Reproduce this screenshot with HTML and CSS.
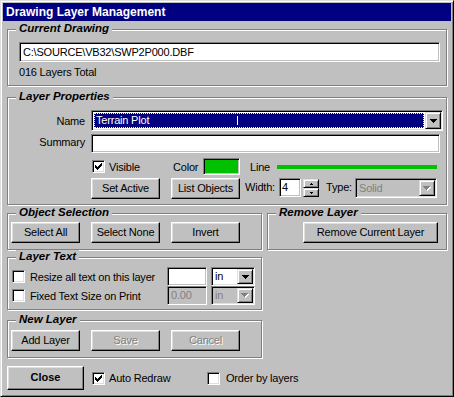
FILE: index.html
```html
<!DOCTYPE html>
<html lang="en">
<head>
    <meta charset="UTF-8">
    <title>Drawing Layer Management</title>
    <link rel="stylesheet" href="styles.css">
</head>
<body>
    <div class="window">
        <div class="titlebar">Drawing Layer Management</div>
        <div class="client">

            <div class="group current">
                <div class="legend">Current Drawing</div>
                <div class="field path">C:\SOURCE\VB32\SWP2P000.DBF</div>
                <div class="note">016 Layers Total</div>
            </div>

            <div class="group props">
                <div class="legend">Layer Properties</div>
                <div class="prop-row name-row">
                    <span class="prop-label">Name</span>
                    <div class="combo combo-name">
                        <div class="combo-value selected">Terrain Plot<span class="ibeam"></span></div>
                        <span class="drop"><svg width="7" height="4"><path d="M0 0h7v1h-1v1h-1v1h-1v1h-1v-1h-1v-1h-1v-1h-1z"/></svg></span>
                    </div>
                </div>
                <div class="prop-row summary-row">
                    <span class="prop-label summary-label">Summary</span>
                    <div class="field summary"></div>
                </div>
                <div class="style-row">
                    <label class="check visible">
                        <span class="box"><svg width="7" height="7"><path d="M6 0h1v1h-1z M5 1h2v1h-2z M0 2h1v1h-1z M4 2h3v1h-3z M0 3h2v1h-2z M3 3h3v1h-3z M0 4h5v1h-5z M1 5h3v1h-3z M2 6h1v1h-1z"/></svg></span>
                        Visible
                    </label>
                    <span class="color-label">Color</span>
                    <span class="swatch"></span>
                    <span class="line-label">Line</span>
                    <span class="line-sample"></span>
                </div>
                <div class="action-row">
                    <button class="btn">Set Active</button>
                    <button class="btn">List Objects</button>
                    <span class="width-label">Width:</span>
                    <div class="field width-field">4</div>
                    <div class="spin">
                        <span class="spin-btn"><svg width="3" height="2"><path d="M1 0h1v1h1v1h-3v-1h1z"/></svg></span>
                        <span class="spin-btn"><svg width="3" height="2"><path d="M0 0h3v1h-1v1h-1v-1h-1z"/></svg></span>
                    </div>
                    <span class="type-label">Type:</span>
                    <div class="combo combo-type disabled">
                        <div class="combo-value">Solid</div>
                        <span class="drop"><svg width="8" height="5"><path class="shade" d="M1 1h7v1h-1v1h-1v1h-1v1h-1v-1h-1v-1h-1v-1h-1z"/><path d="M0 0h7v1h-1v1h-1v1h-1v1h-1v-1h-1v-1h-1v-1h-1z"/></svg></span>
                    </div>
                </div>
            </div>

            <div class="lower">
                <div class="left-col">
                    <div class="group selection">
                        <div class="legend">Object Selection</div>
                        <div class="btn-row">
                            <button class="btn">Select All</button>
                            <button class="btn">Select None</button>
                            <button class="btn">Invert</button>
                        </div>
                    </div>

                    <div class="group layer-text">
                        <div class="legend">Layer Text</div>
                        <div class="text-row first">
                            <label class="check text-check"><span class="box"></span>Resize all text on this layer</label>
                            <div class="field size-field"></div>
                            <div class="combo unit">
                                <div class="combo-value">in</div>
                                <span class="drop"><svg width="7" height="4"><path d="M0 0h7v1h-1v1h-1v1h-1v1h-1v-1h-1v-1h-1v-1h-1z"/></svg></span>
                            </div>
                        </div>
                        <div class="text-row">
                            <label class="check text-check"><span class="box"></span>Fixed Text Size on Print</label>
                            <div class="field size-field disabled">0.00</div>
                            <div class="combo unit disabled">
                                <div class="combo-value">in</div>
                                <span class="drop"><svg width="8" height="5"><path class="shade" d="M1 1h7v1h-1v1h-1v1h-1v1h-1v-1h-1v-1h-1v-1h-1z"/><path d="M0 0h7v1h-1v1h-1v1h-1v1h-1v-1h-1v-1h-1v-1h-1z"/></svg></span>
                            </div>
                        </div>
                    </div>

                    <div class="group new-layer">
                        <div class="legend">New Layer</div>
                        <div class="btn-row">
                            <button class="btn">Add Layer</button>
                            <button class="btn" disabled>Save</button>
                            <button class="btn" disabled>Cancel</button>
                        </div>
                    </div>
                </div>

                <div class="group remove">
                    <div class="legend">Remove Layer</div>
                    <button class="btn remove-btn">Remove Current Layer</button>
                </div>
            </div>

            <div class="footer">
                <button class="btn close">Close</button>
                <label class="check auto">
                    <span class="box"><svg width="7" height="7"><path d="M6 0h1v1h-1z M5 1h2v1h-2z M0 2h1v1h-1z M4 2h3v1h-3z M0 3h2v1h-2z M3 3h3v1h-3z M0 4h5v1h-5z M1 5h3v1h-3z M2 6h1v1h-1z"/></svg></span>
                    Auto Redraw
                </label>
                <label class="check order"><span class="box"></span>Order by layers</label>
            </div>

        </div>
    </div>
</body>
</html>
```

FILE: styles.css
```css
body {
    margin: 0;
    background-color: #c0c0c0;
    font-family: "Liberation Sans", Arial, sans-serif;
    font-size: 11px;
    letter-spacing: -0.2px;
    color: #000;
}
svg {
    display: block;
    shape-rendering: crispEdges;
}
.window {
    width: 454px;
    height: 397px;
    box-sizing: border-box;
    border: 1px solid;
    border-color: #dfdfdf #000 #000 #dfdfdf;
    box-shadow: inset 1px 1px #fff, inset -1px -1px #808080;
    padding: 2px;
}
.titlebar {
    height: 18px;
    line-height: 18px;
    padding-left: 3px;
    background-color: #000080;
    color: #fff;
    font-size: 12px;
    font-weight: bold;
    letter-spacing: 0;
}
.client {
    padding: 0 4px;
}

/* group boxes */
.group {
    box-sizing: border-box;
    border: 1px solid #808080;
    box-shadow: inset 1px 1px #fff, 1px 1px #fff;
}
.legend {
    width: fit-content;
    margin: -8px 0 0 8px;
    padding: 0 3px;
    background-color: #c0c0c0;
    font-size: 11.5px;
    font-weight: bold;
    font-style: italic;
    line-height: 13px;
    letter-spacing: 0;
}

/* controls */
.field {
    box-sizing: border-box;
    border: 1px solid;
    border-color: #808080 #fff #fff #808080;
    box-shadow: inset 1px 1px #000, inset -1px -1px #c0c0c0;
    background-color: #fff;
    padding-left: 3px;
}
.field.disabled {
    background-color: #c0c0c0;
    color: #808080;
}
.combo {
    box-sizing: border-box;
    display: flex;
    border: 1px solid;
    border-color: #808080 #fff #fff #808080;
    box-shadow: inset 1px 1px #000, inset -1px -1px #dfdfdf;
    padding: 1px;
    background-color: #fff;
}
.combo.disabled {
    background-color: #c0c0c0;
    color: #808080;
}
.combo-value {
    flex: 1;
    padding-left: 2px;
}
.drop {
    box-sizing: border-box;
    width: 16px;
    display: flex;
    align-items: center;
    justify-content: center;
    border: 1px solid;
    border-color: #dfdfdf #000 #000 #dfdfdf;
    box-shadow: inset 1px 1px #fff, inset -1px -1px #808080;
    background-color: #c0c0c0;
}
.disabled .drop path {
    fill: #808080;
}
.disabled .drop path.shade {
    fill: #fff;
}
.btn {
    box-sizing: border-box;
    width: 69px;
    height: 21px;
    padding: 0 0 2px;
    font: inherit;
    letter-spacing: inherit;
    color: #000;
    background-color: #c0c0c0;
    border: 1px solid;
    border-color: #fff #000 #000 #fff;
    box-shadow: inset -1px -1px #808080, inset 1px 1px #dfdfdf;
}
.btn:disabled {
    color: #808080;
    text-shadow: 1px 1px #fff;
}
.check {
    display: flex;
    align-items: center;
    gap: 4px;
}
.box {
    box-sizing: border-box;
    width: 13px;
    height: 13px;
    display: flex;
    align-items: center;
    justify-content: center;
    border: 1px solid;
    border-color: #808080 #fff #fff #808080;
    box-shadow: inset 1px 1px #000, inset -1px -1px #dfdfdf;
    background-color: #fff;
}

/* current drawing */
.current {
    margin-top: 8px;
    height: 57px;
}
.path {
    margin: 7px 0 0 11px;
    width: 421px;
    height: 20px;
    line-height: 18px;
}
.note {
    margin: 4px 0 0 11px;
    line-height: 13px;
}

/* layer properties */
.props {
    margin-top: 11px;
    height: 108px;
}
.prop-row {
    display: flex;
    align-items: center;
}
.name-row {
    margin-top: 7px;
    height: 21px;
}
.summary-row {
    margin-top: 3px;
    height: 19px;
}
.prop-label {
    width: 77px;
    margin-right: 6px;
    text-align: right;
}
.summary-label {
    padding-bottom: 4px;
}
.combo-name {
    width: 352px;
    height: 21px;
}
.combo-name .combo-value {
    line-height: 15px;
}
.selected {
    position: relative;
    margin: 1px;
    background-color: #000080;
    color: #fff;
    outline: 1px dotted #ffff80;
    outline-offset: -1px;
}
.ibeam {
    position: absolute;
    left: 143px;
    top: 3px;
    width: 1px;
    height: 9px;
    background-color: #fff;
}
.summary {
    width: 349px;
    height: 19px;
}
.style-row {
    display: flex;
    align-items: center;
    margin: 5px 0 0 84px;
    height: 17px;
}
.visible {
    width: 81px;
}
.color-label {
    width: 30px;
}
.swatch {
    box-sizing: border-box;
    width: 37px;
    height: 17px;
    border: 1px solid;
    border-color: #808080 #fff #fff #808080;
    box-shadow: inset 1px 1px #000, inset -1px -1px #c0c0c0;
    background-color: #00c000;
}
.line-label {
    margin-left: 10px;
    width: 27px;
}
.line-sample {
    width: 160px;
    height: 4px;
    background-color: #00c000;
}
.action-row {
    display: flex;
    align-items: flex-start;
    margin: 3px 0 0 83px;
    height: 21px;
}
.action-row .btn + .btn {
    margin-left: 11px;
}
.width-label {
    margin-left: 5px;
    width: 34px;
    line-height: 19px;
}
.width-field {
    width: 22px;
    height: 19px;
    line-height: 17px;
    padding-left: 2px;
}
.spin {
    display: flex;
    flex-direction: column;
    margin: 1px 0 0 2px;
    width: 16px;
    height: 18px;
}
.spin-btn {
    box-sizing: border-box;
    height: 9px;
    display: flex;
    align-items: center;
    justify-content: center;
    border: 1px solid;
    border-color: #dfdfdf #000 #000 #dfdfdf;
    box-shadow: inset 1px 1px #fff, inset -1px -1px #808080;
}
.type-label {
    margin-left: 7px;
    width: 29px;
    line-height: 19px;
}
.combo-type {
    width: 82px;
    height: 20px;
}
.combo-type .combo-value {
    line-height: 16px;
}

/* lower sections */
.lower {
    display: grid;
    grid-template-columns: 255px 180px;
    column-gap: 5px;
    align-items: start;
    margin-top: 8px;
}
.left-col {
    display: flex;
    flex-direction: column;
}
.selection {
    height: 37px;
}
.btn-row {
    display: flex;
    gap: 11px;
    margin: 3px 0 0 3px;
}
.remove {
    height: 37px;
}
.remove-btn {
    display: block;
    width: 135px;
    margin: 3px 0 0 35px;
}
.layer-text {
    margin-top: 7px;
    height: 53px;
}
.text-row {
    display: flex;
    align-items: center;
    height: 19px;
}
.text-row.first {
    margin-top: 4px;
}
.text-check {
    width: 155px;
    margin-left: 4px;
    gap: 5px;
}
.size-field {
    width: 40px;
    height: 19px;
    line-height: 17px;
}
.unit {
    width: 44px;
    height: 19px;
    margin-left: 4px;
}
.unit .combo-value {
    line-height: 15px;
}
.new-layer {
    margin-top: 10px;
    height: 38px;
}
.new-layer .btn-row {
    margin-top: 4px;
}

/* footer */
.footer {
    display: flex;
    align-items: center;
    margin-top: 8px;
}
.close {
    width: 77px;
    height: 24px;
    font-weight: bold;
    letter-spacing: 0;
}
.auto {
    margin-left: 8px;
    width: 115px;
}
.order {
    gap: 6px;
}
```
